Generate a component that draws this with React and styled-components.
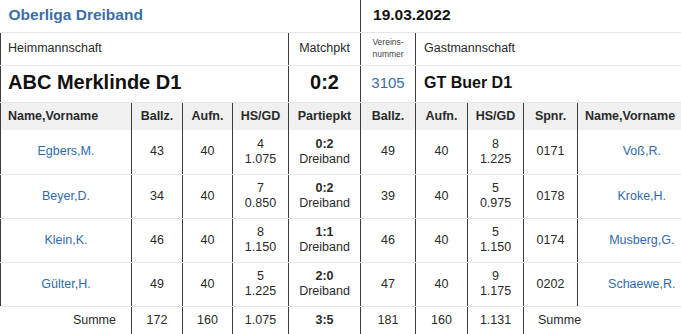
import React from 'react'
import styled, { createGlobalStyle } from 'styled-components';

const GlobalStyle = createGlobalStyle`
    html, body {
        margin: 0;
        padding: 0;
        background: #fff;
        overflow: hidden;
    }
    body {
        font-family: "Liberation Sans", Arial, sans-serif;
        color: #222;
    }
`;

const DARK = '#3c3c3c';
const LIGHT = '#e6e6e6';
const BLUE = '#2f6aad';

const widths = [131, 51, 50, 56, 72, 55, 52, 56, 54, 128];

const home = [
    { name: 'Egbers,M.', ballz: 43, aufn: 40, hs: 4, gd: '1.075', pkt: '0:2' },
    { name: 'Beyer,D.', ballz: 34, aufn: 40, hs: 7, gd: '0.850', pkt: '0:2' },
    { name: 'Klein,K.', ballz: 46, aufn: 40, hs: 8, gd: '1.150', pkt: '1:1' },
    { name: 'Gülter,H.', ballz: 49, aufn: 40, hs: 5, gd: '1.225', pkt: '2:0' },
];

const guest = [
    { name: 'Voß,R.', ballz: 49, aufn: 40, hs: 8, gd: '1.225', spnr: '0171' },
    { name: 'Kroke,H.', ballz: 39, aufn: 40, hs: 5, gd: '0.975', spnr: '0178' },
    { name: 'Musberg,G.', ballz: 46, aufn: 40, hs: 5, gd: '1.150', spnr: '0174' },
    { name: 'Schaewe,R.', ballz: 47, aufn: 40, hs: 9, gd: '1.175', spnr: '0202' },
];

const headers = ['Name,Vorname', 'Ballz.', 'Aufn.', 'HS/GD', 'Partiepkt', 'Ballz.', 'Aufn.', 'HS/GD', 'Spnr.', 'Name,Vorname'];

const App = () => {
    return (
        <>
            <GlobalStyle />
            <Sheet>
                <colgroup>
                    {widths.map((w, i) => <col key={i} style={{ width: w }} />)}
                </colgroup>
                <tbody>
                    <Row $h={32}>
                        <Cell colSpan={5} $open $pad="0 8px">
                            <Title>Oberliga Dreiband</Title>
                        </Cell>
                        <Cell colSpan={5} $pad="0 12px">
                            <MatchDate>19.03.2022</MatchDate>
                        </Cell>
                    </Row>
                    <Row $h={33}>
                        <Cell colSpan={4} $pad="0 7px">Heimmannschaft</Cell>
                        <Cell $align="center">Matchpkt</Cell>
                        <Cell $align="center"><Tiny>Vereins-<br />nummer</Tiny></Cell>
                        <Cell colSpan={4} $pad="0 8px">Gastmannschaft</Cell>
                    </Row>
                    <Row $h={37}>
                        <Cell colSpan={4} $pad="0 7px"><Team $size={20}>ABC Merklinde D1</Team></Cell>
                        <Cell $align="center"><Team $size={20}>0:2</Team></Cell>
                        <Cell $align="center"><ClubNo>3105</ClubNo></Cell>
                        <Cell colSpan={4} $pad="0 8px"><Team $size={16}>GT Buer D1</Team></Cell>
                    </Row>
                    <HeadRow>
                        {headers.map((h, i) => (
                            <HeadCell key={i} $align={h === 'Name,Vorname' ? 'left' : 'center'}>{h}</HeadCell>
                        ))}
                    </HeadRow>
                    {home.map((p, i) => {
                        const g = guest[i];
                        return (
                            <Row key={i} $h={44}>
                                <Cell $align="center"><Player>{p.name}</Player></Cell>
                                <Cell $align="center">{p.ballz}</Cell>
                                <Cell $align="center">{p.aufn}</Cell>
                                <Cell $align="center">{p.hs}<br />{p.gd}</Cell>
                                <Cell $align="center"><b>{p.pkt}</b><br />Dreiband</Cell>
                                <Cell $align="center">{g.ballz}</Cell>
                                <Cell $align="center">{g.aufn}</Cell>
                                <Cell $align="center">{g.hs}<br />{g.gd}</Cell>
                                <Cell $align="center">{g.spnr}</Cell>
                                <Cell $align="center"><Player>{g.name}</Player></Cell>
                            </Row>
                        );
                    })}
                    <Row $h={28}>
                        <Cell $open $align="right" $pad="0 15px">Summe</Cell>
                        <Cell $align="center">172</Cell>
                        <Cell $align="center">160</Cell>
                        <Cell $align="center">1.075</Cell>
                        <Cell $align="center"><b>3:5</b></Cell>
                        <Cell $align="center">181</Cell>
                        <Cell $align="center">160</Cell>
                        <Cell $align="center">1.131</Cell>
                        <Cell colSpan={2} $pad="0 14px">Summe</Cell>
                    </Row>
                </tbody>
            </Sheet>
        </>
    )
};

const Sheet = styled.table`
    width: 705px;
    table-layout: fixed;
    border-collapse: collapse;
    border-spacing: 0;
    font-size: 12.5px;
    color: #2a2a2a;
`;

const Row = styled.tr`
    height: ${p => p.$h}px;
`;

const HeadRow = styled.tr`
    height: 28px;
    background-color: #f0f0f0;
`;

const Cell = styled.td`
    padding: ${p => p.$pad || '0'};
    text-align: ${p => p.$align || 'left'};
    vertical-align: middle;
    line-height: 15px;
    white-space: nowrap;
    border-left: ${p => (p.$open ? 'none' : `1px solid ${DARK}`)};
    border-bottom: 1px solid ${LIGHT};

    b {
        font-weight: bold;
    }
`;

const HeadCell = styled.td`
    padding: ${p => (p.$align === 'left' ? '0 7px' : '0')};
    text-align: ${p => p.$align};
    vertical-align: middle;
    font-weight: bold;
    font-size: 12.5px;
    color: #2a2a2a;
    white-space: nowrap;
    border-left: 1px solid ${DARK};
`;

const Title = styled.span`
    font-size: 15.5px;
    font-weight: bold;
    color: #3a6ea8;
`;

const MatchDate = styled.span`
    font-size: 15.5px;
    font-weight: bold;
    color: #111;
`;

const Tiny = styled.span`
    display: inline-block;
    font-size: 8.5px;
    line-height: 12px;
    color: #444;
`;

const Team = styled.span`
    font-size: ${p => p.$size}px;
    font-weight: bold;
    color: #111;
`;

const ClubNo = styled.span`
    font-size: 15px;
    color: #3a6ea8;
`;

const Player = styled.span`
    color: ${BLUE};
`;

export default App
